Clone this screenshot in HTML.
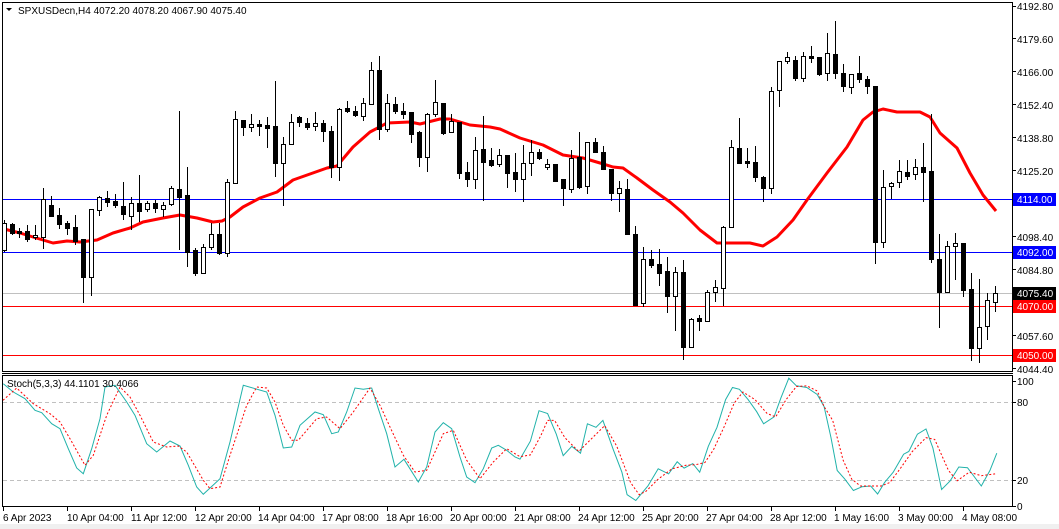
<!DOCTYPE html>
<html><head><meta charset="utf-8"><style>
html,body{margin:0;padding:0;background:#fff;width:1059px;height:529px;overflow:hidden}
svg{display:block}
text{font-family:"Liberation Sans",sans-serif;font-size:10px;fill:#000}
</style></head><body>
<svg width="1059" height="529" viewBox="0 0 1059 529" xmlns="http://www.w3.org/2000/svg">
<rect x="0" y="0" width="1059" height="529" fill="#fff"/>
<rect x="0" y="524" width="1059" height="5" fill="#f0f0f0"/>
<!-- frames -->
<g fill="none" stroke="#000" shape-rendering="crispEdges">
<rect x="2.5" y="2.5" width="1010" height="369"/>
<line x1="2" y1="373.5" x2="1013" y2="373.5"/>
<rect x="2.5" y="375.5" width="1010" height="131"/>
</g>
<!-- horizontal levels -->
<g shape-rendering="crispEdges" stroke-width="1">
<line x1="3" y1="199.5" x2="1012" y2="199.5" stroke="#0000ff"/>
<line x1="3" y1="252.5" x2="1012" y2="252.5" stroke="#0000ff"/>
<line x1="3" y1="293.5" x2="1012" y2="293.5" stroke="#c0c0c0"/>
<line x1="3" y1="306.5" x2="1012" y2="306.5" stroke="#ff0000"/>
<line x1="3" y1="355.5" x2="1012" y2="355.5" stroke="#ff0000"/>
<line x1="3" y1="402.5" x2="1012" y2="402.5" stroke="#c0c0c0" stroke-dasharray="4,3"/>
<line x1="3" y1="480.5" x2="1012" y2="480.5" stroke="#c0c0c0" stroke-dasharray="4,3"/>
</g>
<!-- MA -->
<polyline fill="none" stroke="#ff0000" stroke-width="3" stroke-linejoin="round" points="4,229 20,233 33,237 53,243 67,241 80,242 97,240 113,233 130,228 143,222 163,218 180,215 197,218 213,222 222,221 230,217 243,207 260,198 277,192 293,180 327,168 337,166 353,147 370,132 387,123 410,122 420,124 440,119 450,119 470,125 490,127 500,129 520,138 543,145 563,155 583,158 600,163 613,167 623,168 637,178 653,190 670,202 683,213 700,230 717,243 737,243 750,243 763,246 777,237 793,220 807,200 827,173 847,147 863,120 873,112 883,109 897,112 920,112 930,117 940,133 957,148 970,173 983,195 996,211"/>
<!-- candles -->
<g id="c" shape-rendering="crispEdges" stroke="#000" stroke-width="1">
<script type="text/plain"></script>
</g>
<g shape-rendering="crispEdges" stroke="#000" stroke-width="1">
<line x1="4.5" y1="220" x2="4.5" y2="252"/><rect x="2.5" y="223.5" width="4" height="27" fill="#fff"/>
<line x1="12.5" y1="223" x2="12.5" y2="235"/><rect x="10.5" y="224.5" width="4" height="9" fill="#000"/>
<line x1="19.5" y1="228" x2="19.5" y2="238"/><rect x="17.5" y="231.5" width="4" height="2" fill="#000"/>
<line x1="27.5" y1="225" x2="27.5" y2="242"/><rect x="25.5" y="231.5" width="4" height="8" fill="#000"/>
<line x1="35.5" y1="225" x2="35.5" y2="240"/><rect x="33.5" y="235.5" width="4" height="2" fill="#fff"/>
<line x1="43.5" y1="188" x2="43.5" y2="249"/><rect x="41.5" y="199.5" width="4" height="38" fill="#fff"/>
<line x1="51.5" y1="196" x2="51.5" y2="217"/><rect x="49.5" y="205.5" width="4" height="11" fill="#000"/>
<line x1="59.5" y1="208" x2="59.5" y2="229"/><rect x="57.5" y="215.5" width="4" height="9" fill="#000"/>
<line x1="67.5" y1="221" x2="67.5" y2="235"/><rect x="65.5" y="223.5" width="4" height="5" fill="#000"/>
<line x1="75.5" y1="215" x2="75.5" y2="245"/><rect x="73.5" y="227.5" width="4" height="14" fill="#000"/>
<line x1="83.5" y1="239" x2="83.5" y2="303"/><rect x="81.5" y="239.5" width="4" height="38" fill="#000"/>
<line x1="91.5" y1="209" x2="91.5" y2="296"/><rect x="89.5" y="209.5" width="4" height="68" fill="#fff"/>
<line x1="99.5" y1="196" x2="99.5" y2="216"/><rect x="97.5" y="197.5" width="4" height="13" fill="#fff"/>
<line x1="107.5" y1="191" x2="107.5" y2="207"/><rect x="105.5" y="198.5" width="4" height="4" fill="#000"/>
<line x1="115.5" y1="194" x2="115.5" y2="208"/><rect x="113.5" y="201.5" width="4" height="4" fill="#000"/>
<line x1="123.5" y1="182" x2="123.5" y2="220"/><rect x="121.5" y="206.5" width="4" height="8" fill="#000"/>
<line x1="131.5" y1="197" x2="131.5" y2="230"/><rect x="129.5" y="203.5" width="4" height="13" fill="#fff"/>
<line x1="139.5" y1="175" x2="139.5" y2="222"/><rect x="137.5" y="203.5" width="4" height="8" fill="#000"/>
<line x1="147.5" y1="201" x2="147.5" y2="212"/><rect x="145.5" y="203.5" width="4" height="6" fill="#fff"/>
<line x1="155.5" y1="200" x2="155.5" y2="213"/><rect x="153.5" y="203.5" width="4" height="5" fill="#000"/>
<line x1="163.5" y1="202" x2="163.5" y2="217"/><rect x="161.5" y="205.5" width="4" height="4" fill="#fff"/>
<line x1="171.5" y1="186" x2="171.5" y2="206"/><rect x="169.5" y="188.5" width="4" height="16" fill="#fff"/>
<line x1="179.5" y1="111" x2="179.5" y2="250"/><rect x="177.5" y="189.5" width="4" height="8" fill="#000"/>
<line x1="187.5" y1="167" x2="187.5" y2="267"/><rect x="185.5" y="195.5" width="4" height="57" fill="#000"/>
<line x1="195.5" y1="248" x2="195.5" y2="276"/><rect x="193.5" y="250.5" width="4" height="23" fill="#000"/>
<line x1="203.5" y1="244" x2="203.5" y2="274"/><rect x="201.5" y="247.5" width="4" height="26" fill="#fff"/>
<line x1="211.5" y1="223" x2="211.5" y2="250"/><rect x="209.5" y="234.5" width="4" height="13" fill="#fff"/>
<line x1="219.5" y1="223" x2="219.5" y2="255"/><rect x="217.5" y="234.5" width="4" height="19" fill="#000"/>
<line x1="227.5" y1="179" x2="227.5" y2="257"/><rect x="225.5" y="182.5" width="4" height="71" fill="#fff"/>
<line x1="235.5" y1="111" x2="235.5" y2="183"/><rect x="233.5" y="119.5" width="4" height="64" fill="#fff"/>
<line x1="243.5" y1="120" x2="243.5" y2="136"/><rect x="241.5" y="120.5" width="4" height="7" fill="#000"/>
<line x1="251.5" y1="114" x2="251.5" y2="132"/><rect x="249.5" y="124.5" width="4" height="3" fill="#fff"/>
<line x1="259.5" y1="120" x2="259.5" y2="136"/><rect x="257.5" y="124.5" width="4" height="2" fill="#000"/>
<line x1="267.5" y1="117" x2="267.5" y2="148"/><rect x="265.5" y="125.5" width="4" height="3" fill="#000"/>
<line x1="275.5" y1="81" x2="275.5" y2="177"/><rect x="273.5" y="126.5" width="4" height="37" fill="#000"/>
<line x1="283.5" y1="137" x2="283.5" y2="206"/><rect x="281.5" y="144.5" width="4" height="19" fill="#fff"/>
<line x1="291.5" y1="114" x2="291.5" y2="145"/><rect x="289.5" y="122.5" width="4" height="22" fill="#fff"/>
<line x1="299.5" y1="116" x2="299.5" y2="127"/><rect x="297.5" y="117.5" width="4" height="5" fill="#000"/>
<line x1="307.5" y1="118" x2="307.5" y2="130"/><rect x="305.5" y="123.5" width="4" height="4" fill="#000"/>
<line x1="315.5" y1="112" x2="315.5" y2="131"/><rect x="313.5" y="123.5" width="4" height="3" fill="#fff"/>
<line x1="323.5" y1="120" x2="323.5" y2="142"/><rect x="321.5" y="123.5" width="4" height="8" fill="#000"/>
<line x1="331.5" y1="126" x2="331.5" y2="178"/><rect x="329.5" y="131.5" width="4" height="36" fill="#000"/>
<line x1="339.5" y1="108" x2="339.5" y2="181"/><rect x="337.5" y="109.5" width="4" height="58" fill="#fff"/>
<line x1="347.5" y1="101" x2="347.5" y2="113"/><rect x="345.5" y="108.5" width="4" height="3" fill="#000"/>
<line x1="355.5" y1="106" x2="355.5" y2="117"/><rect x="353.5" y="111.5" width="4" height="4" fill="#000"/>
<line x1="363.5" y1="98" x2="363.5" y2="121"/><rect x="361.5" y="103.5" width="4" height="13" fill="#fff"/>
<line x1="371.5" y1="62" x2="371.5" y2="104"/><rect x="369.5" y="70.5" width="4" height="34" fill="#fff"/>
<line x1="379.5" y1="56" x2="379.5" y2="140"/><rect x="377.5" y="70.5" width="4" height="59" fill="#000"/>
<line x1="387.5" y1="94" x2="387.5" y2="132"/><rect x="385.5" y="103.5" width="4" height="26" fill="#fff"/>
<line x1="395.5" y1="97" x2="395.5" y2="114"/><rect x="393.5" y="104.5" width="4" height="7" fill="#000"/>
<line x1="403.5" y1="103" x2="403.5" y2="119"/><rect x="401.5" y="111.5" width="4" height="3" fill="#000"/>
<line x1="411.5" y1="112" x2="411.5" y2="143"/><rect x="409.5" y="112.5" width="4" height="22" fill="#000"/>
<line x1="419.5" y1="131" x2="419.5" y2="167"/><rect x="417.5" y="132.5" width="4" height="25" fill="#000"/>
<line x1="427.5" y1="113" x2="427.5" y2="172"/><rect x="425.5" y="114.5" width="4" height="43" fill="#fff"/>
<line x1="435.5" y1="80" x2="435.5" y2="117"/><rect x="433.5" y="102.5" width="4" height="12" fill="#fff"/>
<line x1="443.5" y1="103" x2="443.5" y2="135"/><rect x="441.5" y="103.5" width="4" height="30" fill="#000"/>
<line x1="451.5" y1="114" x2="451.5" y2="133"/><rect x="449.5" y="121.5" width="4" height="11" fill="#fff"/>
<line x1="459.5" y1="122" x2="459.5" y2="179"/><rect x="457.5" y="122.5" width="4" height="51" fill="#000"/>
<line x1="467.5" y1="162" x2="467.5" y2="187"/><rect x="465.5" y="172.5" width="4" height="7" fill="#000"/>
<line x1="475.5" y1="137" x2="475.5" y2="189"/><rect x="473.5" y="150.5" width="4" height="29" fill="#fff"/>
<line x1="483.5" y1="116" x2="483.5" y2="201"/><rect x="481.5" y="149.5" width="4" height="13" fill="#000"/>
<line x1="491.5" y1="148" x2="491.5" y2="167"/><rect x="489.5" y="160.5" width="4" height="5" fill="#000"/>
<line x1="499.5" y1="149" x2="499.5" y2="167"/><rect x="497.5" y="155.5" width="4" height="9" fill="#fff"/>
<line x1="507.5" y1="155" x2="507.5" y2="188"/><rect x="505.5" y="155.5" width="4" height="18" fill="#000"/>
<line x1="515.5" y1="153" x2="515.5" y2="192"/><rect x="513.5" y="172.5" width="4" height="7" fill="#000"/>
<line x1="523.5" y1="145" x2="523.5" y2="202"/><rect x="521.5" y="163.5" width="4" height="16" fill="#fff"/>
<line x1="531.5" y1="140" x2="531.5" y2="176"/><rect x="529.5" y="152.5" width="4" height="11" fill="#fff"/>
<line x1="539.5" y1="149" x2="539.5" y2="160"/><rect x="537.5" y="152.5" width="4" height="6" fill="#000"/>
<line x1="547.5" y1="159" x2="547.5" y2="170"/><rect x="545.5" y="164.5" width="4" height="3" fill="#fff"/>
<line x1="555.5" y1="164" x2="555.5" y2="182"/><rect x="553.5" y="164.5" width="4" height="17" fill="#000"/>
<line x1="563.5" y1="179" x2="563.5" y2="206"/><rect x="561.5" y="179.5" width="4" height="9" fill="#000"/>
<line x1="571.5" y1="150" x2="571.5" y2="193"/><rect x="569.5" y="158.5" width="4" height="31" fill="#fff"/>
<line x1="579.5" y1="132" x2="579.5" y2="189"/><rect x="577.5" y="157.5" width="4" height="30" fill="#000"/>
<line x1="587.5" y1="142" x2="587.5" y2="194"/><rect x="585.5" y="142.5" width="4" height="44" fill="#fff"/>
<line x1="595.5" y1="138" x2="595.5" y2="153"/><rect x="593.5" y="142.5" width="4" height="10" fill="#000"/>
<line x1="603.5" y1="146" x2="603.5" y2="170"/><rect x="601.5" y="152.5" width="4" height="17" fill="#000"/>
<line x1="611.5" y1="169" x2="611.5" y2="201"/><rect x="609.5" y="169.5" width="4" height="24" fill="#000"/>
<line x1="619.5" y1="181" x2="619.5" y2="212"/><rect x="617.5" y="188.5" width="4" height="5" fill="#fff"/>
<line x1="627.5" y1="179" x2="627.5" y2="235"/><rect x="625.5" y="189.5" width="4" height="45" fill="#000"/>
<line x1="635.5" y1="226" x2="635.5" y2="306"/><rect x="633.5" y="234.5" width="4" height="71" fill="#000"/>
<line x1="643.5" y1="247" x2="643.5" y2="307"/><rect x="641.5" y="259.5" width="4" height="44" fill="#fff"/>
<line x1="651.5" y1="250" x2="651.5" y2="268"/><rect x="649.5" y="259.5" width="4" height="6" fill="#000"/>
<line x1="659.5" y1="249" x2="659.5" y2="286"/><rect x="657.5" y="264.5" width="4" height="9" fill="#000"/>
<line x1="667.5" y1="257" x2="667.5" y2="313"/><rect x="665.5" y="271.5" width="4" height="25" fill="#000"/>
<line x1="675.5" y1="267" x2="675.5" y2="331"/><rect x="673.5" y="272.5" width="4" height="24" fill="#fff"/>
<line x1="683.5" y1="260" x2="683.5" y2="360"/><rect x="681.5" y="272.5" width="4" height="75" fill="#000"/>
<line x1="691.5" y1="318" x2="691.5" y2="348"/><rect x="689.5" y="319.5" width="4" height="28" fill="#fff"/>
<line x1="699.5" y1="315" x2="699.5" y2="331"/><rect x="697.5" y="318.5" width="4" height="3" fill="#000"/>
<line x1="707.5" y1="290" x2="707.5" y2="321"/><rect x="705.5" y="292.5" width="4" height="29" fill="#fff"/>
<line x1="715.5" y1="280" x2="715.5" y2="302"/><rect x="713.5" y="287.5" width="4" height="5" fill="#fff"/>
<line x1="723.5" y1="226" x2="723.5" y2="306"/><rect x="721.5" y="227.5" width="4" height="61" fill="#fff"/>
<line x1="731.5" y1="140" x2="731.5" y2="228"/><rect x="729.5" y="147.5" width="4" height="80" fill="#fff"/>
<line x1="739.5" y1="118" x2="739.5" y2="164"/><rect x="737.5" y="148.5" width="4" height="15" fill="#000"/>
<line x1="747.5" y1="148" x2="747.5" y2="168"/><rect x="745.5" y="161.5" width="4" height="2" fill="#000"/>
<line x1="755.5" y1="146" x2="755.5" y2="182"/><rect x="753.5" y="162.5" width="4" height="15" fill="#000"/>
<line x1="763.5" y1="176" x2="763.5" y2="202"/><rect x="761.5" y="177.5" width="4" height="11" fill="#000"/>
<line x1="771.5" y1="87" x2="771.5" y2="194"/><rect x="769.5" y="91.5" width="4" height="97" fill="#fff"/>
<line x1="779.5" y1="61" x2="779.5" y2="107"/><rect x="777.5" y="61.5" width="4" height="29" fill="#fff"/>
<line x1="787.5" y1="52" x2="787.5" y2="64"/><rect x="785.5" y="57.5" width="4" height="4" fill="#fff"/>
<line x1="795.5" y1="56" x2="795.5" y2="81"/><rect x="793.5" y="60.5" width="4" height="18" fill="#000"/>
<line x1="803.5" y1="52" x2="803.5" y2="82"/><rect x="801.5" y="56.5" width="4" height="22" fill="#fff"/>
<line x1="811.5" y1="46" x2="811.5" y2="63"/><rect x="809.5" y="56.5" width="4" height="2" fill="#000"/>
<line x1="819.5" y1="57" x2="819.5" y2="76"/><rect x="817.5" y="57.5" width="4" height="17" fill="#000"/>
<line x1="827.5" y1="33" x2="827.5" y2="81"/><rect x="825.5" y="53.5" width="4" height="20" fill="#fff"/>
<line x1="835.5" y1="21" x2="835.5" y2="79"/><rect x="833.5" y="54.5" width="4" height="19" fill="#000"/>
<line x1="843.5" y1="64" x2="843.5" y2="92"/><rect x="841.5" y="73.5" width="4" height="13" fill="#000"/>
<line x1="851.5" y1="74" x2="851.5" y2="94"/><rect x="849.5" y="74.5" width="4" height="13" fill="#fff"/>
<line x1="859.5" y1="56" x2="859.5" y2="83"/><rect x="857.5" y="73.5" width="4" height="6" fill="#000"/>
<line x1="867.5" y1="76" x2="867.5" y2="94"/><rect x="865.5" y="79.5" width="4" height="7" fill="#000"/>
<line x1="875.5" y1="86" x2="875.5" y2="264"/><rect x="873.5" y="86.5" width="4" height="156" fill="#000"/>
<line x1="883.5" y1="170" x2="883.5" y2="248"/><rect x="881.5" y="187.5" width="4" height="55" fill="#fff"/>
<line x1="891.5" y1="182" x2="891.5" y2="199"/><rect x="889.5" y="183.5" width="4" height="3" fill="#fff"/>
<line x1="899.5" y1="160" x2="899.5" y2="188"/><rect x="897.5" y="171.5" width="4" height="11" fill="#fff"/>
<line x1="907.5" y1="160" x2="907.5" y2="180"/><rect x="905.5" y="172.5" width="4" height="4" fill="#000"/>
<line x1="915.5" y1="159" x2="915.5" y2="180"/><rect x="913.5" y="167.5" width="4" height="7" fill="#fff"/>
<line x1="923.5" y1="143" x2="923.5" y2="202"/><rect x="921.5" y="167.5" width="4" height="5" fill="#000"/>
<line x1="931.5" y1="114" x2="931.5" y2="263"/><rect x="929.5" y="171.5" width="4" height="88" fill="#000"/>
<line x1="939.5" y1="234" x2="939.5" y2="328"/><rect x="937.5" y="259.5" width="4" height="33" fill="#000"/>
<line x1="947.5" y1="241" x2="947.5" y2="292"/><rect x="945.5" y="246.5" width="4" height="46" fill="#fff"/>
<line x1="955.5" y1="233" x2="955.5" y2="280"/><rect x="953.5" y="243.5" width="4" height="3" fill="#fff"/>
<line x1="963.5" y1="243" x2="963.5" y2="297"/><rect x="961.5" y="243.5" width="4" height="47" fill="#000"/>
<line x1="971.5" y1="273" x2="971.5" y2="361"/><rect x="969.5" y="289.5" width="4" height="59" fill="#000"/>
<line x1="979.5" y1="279" x2="979.5" y2="363"/><rect x="977.5" y="327.5" width="4" height="21" fill="#fff"/>
<line x1="987.5" y1="293" x2="987.5" y2="340"/><rect x="985.5" y="300.5" width="4" height="26" fill="#fff"/>
<line x1="995.5" y1="286" x2="995.5" y2="312"/><rect x="993.5" y="293.5" width="4" height="9" fill="#fff"/>
</g>
<!-- stochastic -->
<polyline fill="none" stroke="#20b2aa" stroke-width="1" points="3.3,383.7 13.3,392 25,398.7 35,410.3 41.7,412.7 51.7,423.7 60,428.7 68.3,448.7 76.7,468 83.3,473.7 91.7,448.7 100,418.7 105,387 115,385.3 126.7,402 135,415.3 146.7,443.7 156.7,452 170,441 180,446 188.3,465.3 196.7,487 203.3,494.3 220,478.7 230,442 243.3,385.3 266.7,392 275,415.3 283.3,448 291.7,447 300,425.3 315,412 323.3,414.7 331.7,433.7 338.3,432 346.7,412 355,388 363.3,389.3 371.7,388 378.3,408.7 386.7,433.7 395,467 404,459.3 418.3,482 426.7,467 435,432 443.3,422.7 451.7,428.7 460,457 466.7,477 475,482.7 483.3,468.7 491.7,448 498.3,445.3 506.7,450.3 515,457 520,459.1 530.4,441.1 539,410.7 547.6,413.5 556.3,434.2 563.2,455.6 571.8,446.3 580.5,453.2 587.4,423.8 596,427.3 602.9,420.4 613.3,449.7 621.9,472.2 627.1,494.7 635.8,500.5 647.9,486 658.2,468.8 668.6,473.9 677.2,461.8 684.1,468.1 692.8,463.6 699.7,472.2 708.3,446.3 717,427.3 725.6,399.6 732.5,387.5 739.4,389.3 748.1,399.6 756.7,411.7 763.6,423.8 774,416.9 780.9,397.9 788.8,378.2 796.4,385.8 806.8,387.5 817.2,394.5 824.1,406.6 831,437.7 837.2,470.5 844.8,479.1 853.4,490.5 862.1,486.7 870.7,486 877.6,494 884.5,482.6 893.2,472.2 903.6,454.2 908.8,451.5 917.4,434.2 926,429 932.9,448 941.6,489.5 950.2,480.8 958.8,467 967.5,467.7 981.3,486 989.9,470.5 996.8,453.2"/>
<polyline fill="none" stroke="#ff0000" stroke-width="1" stroke-dasharray="2,2" points="3,400.3 16.7,388 33.3,403.7 50,413.7 60,422 70,438.7 85,465.3 93.3,455.3 106.7,415.3 120,387 130,397 140,415.3 153.3,442 166.7,447 178.3,446 186.7,452 203.3,480.3 210,488.7 220,487 230,455.3 246.7,405.3 256.7,387 266.7,388 275,402 283.3,425.3 291.7,440.3 298.3,440.3 316.7,418.7 326.7,417 340,428.7 353.3,412 370,388 380,405.3 390,427 403.3,455.3 415,472 426.7,470.3 443.3,433.7 453.3,430.3 466.7,460.3 480,478.7 493.3,462 506.7,448.7 520,456.7 530.4,454.9 540.7,435.9 547.6,420.4 554.6,420.4 564.9,437.7 578.7,451.5 589.1,441.1 604.7,425.6 616.8,446.3 630.6,482.6 639.2,494.7 646.1,491.2 658.2,479.1 672,468.8 685.9,465.3 696.2,464.6 704.9,462.5 713.5,449.7 723.9,427.3 734.2,403.1 742.9,392 755,399.6 767.1,413.5 775.7,416.9 786.1,399.6 796.4,386.5 806.8,385.8 817.2,391 824.1,406.6 832.7,420.4 843.1,460.1 851.7,479.1 860.4,486 874.2,486 881.1,486 889.7,482.6 900.1,468.8 912.3,451.5 926,437.7 934.7,439.4 948.5,470.5 957.1,480.8 969.2,472.2 981.3,475.7 995.1,473.9"/>
<!-- titles -->
<path d="M6 8 L12 8 L9 11 Z" fill="#000"/>
<text x="18" y="14">SPXUSDecn,H4  4072.20 4078.20 4067.90 4075.40</text>
<text x="7" y="387">Stoch(5,3,3) 44.1101 30.4066</text>
<!-- right axis -->
<g shape-rendering="crispEdges" stroke="#000">
<line x1="1012" y1="6.5" x2="1016" y2="6.5"/><line x1="1012" y1="38.5" x2="1016" y2="38.5"/><line x1="1012" y1="71.5" x2="1016" y2="71.5"/><line x1="1012" y1="104.5" x2="1016" y2="104.5"/><line x1="1012" y1="137.5" x2="1016" y2="137.5"/><line x1="1012" y1="170.5" x2="1016" y2="170.5"/><line x1="1012" y1="236.5" x2="1016" y2="236.5"/><line x1="1012" y1="269.5" x2="1016" y2="269.5"/><line x1="1012" y1="335.5" x2="1016" y2="335.5"/><line x1="1012" y1="368.5" x2="1016" y2="368.5"/>
<line x1="1012" y1="381.5" x2="1016" y2="381.5"/><line x1="1012" y1="402.5" x2="1016" y2="402.5"/><line x1="1012" y1="480.5" x2="1016" y2="480.5"/><line x1="1012" y1="506.5" x2="1016" y2="506.5"/>
</g>
<g>
<text x="1017" y="10">4192.80</text>
<text x="1017" y="43">4179.60</text>
<text x="1017" y="76">4166.00</text>
<text x="1017" y="109">4152.40</text>
<text x="1017" y="142">4138.80</text>
<text x="1017" y="175">4125.20</text>
<text x="1017" y="241">4098.40</text>
<text x="1017" y="274">4084.80</text>
<text x="1017" y="340">4057.60</text>
<text x="1017" y="373">4044.40</text>
<text x="1017" y="385">100</text>
<text x="1017" y="406">80</text>
<text x="1017" y="484">20</text>
<text x="1017" y="510">0</text>
</g>
<rect x="1013" y="193" width="43" height="13" fill="#0000ff"/><text x="1017" y="203" style="fill:#fff">4114.00</text>
<rect x="1013" y="246" width="43" height="13" fill="#0000ff"/><text x="1017" y="256" style="fill:#fff">4092.00</text>
<rect x="1013" y="287" width="43" height="13" fill="#000"/><text x="1017" y="297" style="fill:#fff">4075.40</text>
<rect x="1013" y="300" width="43" height="13" fill="#ff0000"/><text x="1017" y="310" style="fill:#fff">4070.00</text>
<rect x="1013" y="349" width="43" height="13" fill="#ff0000"/><text x="1017" y="359" style="fill:#fff">4050.00</text>
<!-- bottom axis -->
<g shape-rendering="crispEdges" stroke="#000">
<line x1="3.5" y1="507" x2="3.5" y2="511"/><line x1="67.5" y1="507" x2="67.5" y2="511"/><line x1="131.5" y1="507" x2="131.5" y2="511"/><line x1="195.5" y1="507" x2="195.5" y2="511"/><line x1="259.5" y1="507" x2="259.5" y2="511"/><line x1="323.5" y1="507" x2="323.5" y2="511"/><line x1="387.5" y1="507" x2="387.5" y2="511"/><line x1="451.5" y1="507" x2="451.5" y2="511"/><line x1="515.5" y1="507" x2="515.5" y2="511"/><line x1="579.5" y1="507" x2="579.5" y2="511"/><line x1="643.5" y1="507" x2="643.5" y2="511"/><line x1="707.5" y1="507" x2="707.5" y2="511"/><line x1="771.5" y1="507" x2="771.5" y2="511"/><line x1="835.5" y1="507" x2="835.5" y2="511"/><line x1="899.5" y1="507" x2="899.5" y2="511"/><line x1="963.5" y1="507" x2="963.5" y2="511"/>
</g>
<g>
<text x="3" y="521">6 Apr 2023</text>
<text x="67" y="521">10 Apr 04:00</text>
<text x="131" y="521">11 Apr 12:00</text>
<text x="195" y="521">12 Apr 20:00</text>
<text x="258" y="521">14 Apr 04:00</text>
<text x="322" y="521">17 Apr 08:00</text>
<text x="386" y="521">18 Apr 16:00</text>
<text x="450" y="521">20 Apr 00:00</text>
<text x="514" y="521">21 Apr 08:00</text>
<text x="578" y="521">24 Apr 12:00</text>
<text x="642" y="521">25 Apr 20:00</text>
<text x="706" y="521">27 Apr 04:00</text>
<text x="770" y="521">28 Apr 12:00</text>
<text x="834" y="521">1 May 16:00</text>
<text x="898" y="521">3 May 00:00</text>
<text x="962" y="521">4 May 08:00</text>
</g>
</svg>
</body></html>
